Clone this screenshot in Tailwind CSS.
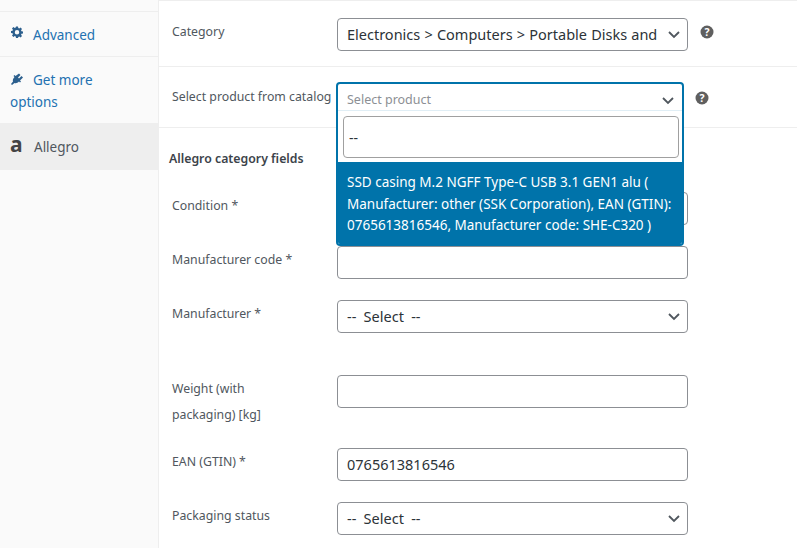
<!DOCTYPE html>
<html lang="en">
<head>
    <meta charset="UTF-8">
    <title>Allegro product fields</title>
    <script src="https://cdn.jsdelivr.net/npm/@tailwindcss/browser@4"></script>
</head>
<body class="h-[548px] overflow-hidden bg-white font-['Noto_Sans','Open_Sans',sans-serif] text-[12.300px] text-[#50575e]">
    <div class="flex h-[548px]">
        <!-- sidebar -->
        <div class="w-[159px] shrink-0 bg-[#fafafa] border-r border-[#eee] text-[13.500px]">
            <div class="h-[12px] border-b border-[#eee]"></div>
            <a class="flex items-center h-[45px] pl-[11px] border-b border-[#eee] text-[#2271b1]">
                <svg class="w-[12px] h-[12px] mb-[4px] mr-[10px] text-[#2c5f8d]" viewBox="0 0 24 24" fill="currentColor"><path fill-rule="evenodd" d="M10 1h4l.6 3.2 1.9.8L19.2 3 22 5.800 20.100 8.500l.8 1.900L24 11v4l-3.100.6-.8 1.900 1.900 2.700-2.800 2.800-2.700-1.900-1.900.8L14 24h-4l-.6-3.100-1.900-.8-2.700 1.900L2 19.200l1.900-2.700-.8-1.900L0 14v-4l3.100-.6.8-1.900L2 4.800 4.800 2l2.700 1.900 1.900-.8L10 1zm2 7a4.500 4.500 0 1 0 0 9 4.500 4.500 0 0 0 0-9z"/></svg>
                <span class="leading-[22px] pt-[1px]">Advanced</span>
            </a>
            <a class="block h-[67px] pl-[10px] pt-[12px] border-b border-[#eee] text-[#2271b1] leading-[22px]">
                <svg class="inline-block ml-[1px] w-[12px] h-[12px] mb-[5px] mr-[10px] text-[#2c5f8d]" viewBox="0 0 24 24" fill="currentColor"><path d="M16 1l3 3-5 5 2 2 5-5 3 3-6 6 2 2-2 2-2-2c-3 3-6 4-9 3l-5 4-2-2 4-5c-1-3 0-6 3-9l-2-2 2-2 2 2 7-5z"/></svg>Get more<br>options
            </a>
            <a class="flex items-center h-[46px] pl-[10px] bg-[#eee] text-[#50575e]">
                <span class="w-[23px] font-bold text-[21px] leading-none mb-[6px] text-[#444]">a</span>
                <span class="leading-[22px] ml-[1px]">Allegro</span>
            </a>
        </div>

        <!-- panel -->
        <div class="relative flex-1 min-w-0">
            <div class="flex h-[67px] border-t border-b border-[#eee] pl-[13px] pt-[17px]">
                <label class="w-[165px] shrink-0 leading-[26px] pt-[1px]">Category</label>
                <div class="relative flex items-center w-[351px] h-[33px] pl-[9px] pr-[24px] border border-[#8c8f94] rounded-[4px] text-[14.500px] [word-spacing:0.4px] text-[#2c3338] whitespace-nowrap overflow-hidden">
                    Electronics &gt; Computers &gt; Portable Disks and
                    <svg class="absolute right-[7px] top-[11px] w-[12px] h-[9px]" viewBox="0 0 12 9" fill="none" stroke="#50575e" stroke-width="1.800"><path d="M1 2l5 5 5-5"/></svg>
                </div>
                <svg class="ml-[12px] mt-[7px] w-[14px] h-[14px]" viewBox="0 0 14 14"><circle cx="7" cy="7" r="6.500" fill="#5f5f5f"/><text x="7" y="10.800" text-anchor="middle" font-size="10.500" font-weight="700" fill="#fff">?</text></svg>
            </div>
            <div class="relative flex h-[61px] border-b border-[#eee] pl-[13px] pt-[17px]">
                <label class="w-[165px] shrink-0 leading-[26px] whitespace-nowrap">Select product from catalog</label>
                <svg class="absolute left-[536px] top-[24px] w-[14px] h-[14px]" viewBox="0 0 14 14"><circle cx="7" cy="7" r="6.500" fill="#5f5f5f"/><text x="7" y="10.800" text-anchor="middle" font-size="10.500" font-weight="700" fill="#fff">?</text></svg>
            </div>

            <div class="pl-[10px] pt-[20px] h-[64px] font-semibold text-[12.300px] leading-[22px] text-[#3c434a]">Allegro category fields</div>

            <div class="flex flex-col pl-[13px]">
                <div class="flex h-[54px]">
                    <label class="w-[165px] shrink-0 leading-[26px] pt-[1px]">Condition *</label>
                    <div class="w-[351px] h-[33px] border border-[#8c8f94] rounded-[4px]"></div>
                </div>
                <div class="flex h-[54px]">
                    <label class="w-[165px] shrink-0 leading-[26px] pt-[1px]">Manufacturer code *</label>
                    <div class="w-[351px] h-[33px] border border-[#8c8f94] rounded-[4px]"></div>
                </div>
                <div class="flex h-[75px]">
                    <label class="w-[165px] shrink-0 leading-[26px] pt-[1px]">Manufacturer *</label>
                    <div class="relative flex items-center w-[351px] h-[33px] pl-[9px] border border-[#8c8f94] rounded-[4px] text-[14.500px] [word-spacing:3.500px] text-[#2c3338]">
                        -- Select --
                        <svg class="absolute right-[7px] top-[11px] w-[12px] h-[9px]" viewBox="0 0 12 9" fill="none" stroke="#50575e" stroke-width="1.800"><path d="M1 2l5 5 5-5"/></svg>
                    </div>
                </div>
                <div class="flex h-[73px]">
                    <label class="w-[165px] shrink-0 leading-[26px] pt-[1px] pr-[60px]">Weight (with packaging) [kg]</label>
                    <div class="w-[351px] h-[33px] border border-[#8c8f94] rounded-[4px]"></div>
                </div>
                <div class="flex h-[54px]">
                    <label class="w-[165px] shrink-0 leading-[26px] pt-[1px]">EAN (GTIN) *</label>
                    <div class="flex items-center w-[351px] h-[33px] pl-[9px] border border-[#8c8f94] rounded-[4px] text-[14.500px] text-[#2c3338]">0765613816546</div>
                </div>
                <div class="flex h-[46px]">
                    <label class="w-[165px] shrink-0 leading-[26px] pt-[1px]">Packaging status</label>
                    <div class="relative flex items-center w-[351px] h-[33px] pl-[9px] border border-[#8c8f94] rounded-[4px] text-[14.500px] [word-spacing:3.500px] text-[#2c3338]">
                        -- Select --
                        <svg class="absolute right-[7px] top-[11px] w-[12px] h-[9px]" viewBox="0 0 12 9" fill="none" stroke="#50575e" stroke-width="1.800"><path d="M1 2l5 5 5-5"/></svg>
                    </div>
                </div>
            </div>

            <!-- open product dropdown -->
            <div class="absolute left-[177px] top-[82px] w-[348px] h-[164px] rounded-[4px] border-2 border-[#0073aa] bg-white overflow-hidden">
                <div class="relative h-[27px] border-b border-[#e0eef5] pl-[9px] pt-[4px] leading-[24px] text-[12.500px] text-[#8c8f94]">
                    Select product
                    <svg class="absolute right-[8px] top-[12px] w-[12px] h-[9px]" viewBox="0 0 12 9" fill="none" stroke="#50575e" stroke-width="1.800"><path d="M1 2l5 5 5-5"/></svg>
                </div>
                <div class="pl-[5px] pr-[3px] pt-[5px] h-[51px]">
                    <div class="flex items-center h-[42px] pl-[5px] border border-[#a0a0a0] rounded-[4px] text-[14px] text-[#2c3338]">--</div>
                </div>
                <div class="h-[82px] bg-[#0073aa] text-white pl-[9px] pr-[4px] pt-[10px] text-[13.500px] leading-[21.500px]">SSD casing M.2 NGFF Type-C USB 3.1 GEN1 alu ( Manufacturer: other (SSK Corporation), EAN (GTIN): 0765613816546, Manufacturer code: SHE-C320 )</div>
            </div>
        </div>
    </div>
</body>
</html>
